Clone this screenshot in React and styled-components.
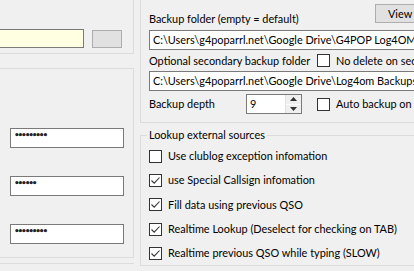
import React from 'react';
import styled, {createGlobalStyle} from 'styled-components';

const Global = createGlobalStyle`
    html, body {
        margin: 0;
        padding: 0;
        background: #f0f0f0;
    }
    body {
        font-family: 'Lato', 'Liberation Sans', sans-serif;
        font-size: 10.9px;
        color: #000;
    }
`

const Window = styled.div`
    width: 414px;
    height: 271px;
    overflow: hidden;
    display: flex;
    flex-flow: row nowrap;
    background: #f0f0f0;
`

const LeftColumn = styled.div`
    width: 134px;
    flex-shrink: 0;
    display: flex;
    flex-flow: column nowrap;
`

const RightColumn = styled.div`
    flex: 1;
    margin-left: 6px;
    display: flex;
    flex-flow: column nowrap;
    min-width: 0;
`

const Group = styled.div`
    box-sizing: border-box;
    border: 1px solid #dcdcdc;
    border-left: ${props => props.openLeft ? 'none' : '1px solid #dcdcdc'};
    border-top: ${props => props.openTop ? 'none' : '1px solid #dcdcdc'};
    border-right: ${props => props.openRight ? 'none' : '1px solid #dcdcdc'};
    height: ${props => props.h}px;
    margin-top: ${props => props.mt || 0}px;
    position: relative;
    flex-shrink: 0;
`

const Legend = styled.span`
    position: absolute;
    top: -9px;
    left: 6px;
    padding: 0 2px;
    background: #f0f0f0;
    line-height: 16px;
    white-space: nowrap;
`

const TopRow = styled.div`
    display: flex;
    align-items: center;
    gap: 8px;
    margin-top: 29px;
    margin-left: -10px;
`

const YellowInput = styled.div`
    width: 94px;
    height: 19px;
    box-sizing: border-box;
    border: 1px solid #7a7a7a;
    background: #ffffe1;
`

const GrayButton = styled.div`
    width: 30px;
    height: 18px;
    box-sizing: border-box;
    border: 1px solid #adadad;
    background: #e1e1e1;
`

const PasswordList = styled.div`
    display: flex;
    flex-flow: column nowrap;
    padding: 59px 0 0 10px;
    gap: 28px;
`

const Password = styled.div`
    width: 114px;
    height: 20px;
    box-sizing: border-box;
    border: 1px solid #7a7a7a;
    background: #fff;
    padding: 1px 0 0 3px;
    font-family: 'DejaVu Sans', sans-serif;
    font-size: 9px;
    letter-spacing: -2.2px;
    line-height: 10px;
    font-weight: bold;
    color: #222;
`

const BottomLine = styled.div`
    height: 0;
    border-top: 1px solid #dcdcdc;
    margin-top: 5px;
`

const Inner = styled.div`
    padding: 0 0 0 8px;
    display: flex;
    flex-flow: column nowrap;
`

const HeadRow = styled.div`
    display: flex;
    align-items: flex-end;
    height: 30px;
`

const Label = styled.span`
    white-space: nowrap;
    line-height: 16px;
    margin-bottom: ${props => props.mb || 0}px;
    width: ${props => props.w ? `${props.w}px` : 'auto'};
    flex-shrink: ${props => props.w ? 0 : 1};
`

const ViewButton = styled.div`
    margin-left: auto;
    align-self: flex-start;
    margin-top: 4px;
    width: 44px;
    height: 19px;
    box-sizing: border-box;
    border: 1px solid #adadad;
    background: #e1e1e1;
    padding-left: 12px;
    line-height: 17px;
    margin-right: -5px;
    flex-shrink: 0;
`

const PathInput = styled.div`
    height: 20px;
    box-sizing: border-box;
    border: 1px solid #7a7a7a;
    border-right: none;
    background: #fff;
    padding-left: 3px;
    line-height: 18px;
    white-space: nowrap;
    overflow: hidden;
    margin-right: -1px;
`

const OptionRow = styled.div`
    display: flex;
    align-items: center;
    height: 21px;
    white-space: nowrap;
    overflow: hidden;
`

const DepthRow = styled.div`
    display: flex;
    align-items: center;
    height: 20px;
    margin-top: 3px;
    white-space: nowrap;
    overflow: hidden;
`

const Spinner = styled.div`
    width: 56px;
    height: 20px;
    box-sizing: border-box;
    border: 1px solid #7a7a7a;
    background: #fff;
    display: flex;
    flex-shrink: 0;
`

const SpinValue = styled.span`
    flex: 1;
    padding-left: 3px;
    line-height: 18px;
`

const SpinButtons = styled.div`
    width: 15px;
    display: flex;
    flex-flow: column nowrap;
    border-left: 1px solid #e0e0e0;
`

const SpinButton = styled.div`
    flex: 1;
    display: flex;
    align-items: center;
    justify-content: center;
    background: #f0f0f0;
    border-bottom: ${props => props.top ? '1px solid #fff' : 'none'};
`

const Box = styled.span`
    width: 13px;
    height: 13px;
    box-sizing: border-box;
    border: 1px solid #333;
    background: #fff;
    display: inline-flex;
    align-items: center;
    justify-content: center;
    flex-shrink: 0;
    margin-left: ${props => props.ml || 0}px;
    margin-right: 6px;
`

const LookupGroup = styled(Group)`
    margin-top: 12px;
`

const CheckList = styled.div`
    display: flex;
    flex-flow: column nowrap;
    padding: 8px 0 0 8px;
`

const CheckRow = styled.div`
    display: flex;
    align-items: center;
    height: 24.3px;
    white-space: nowrap;
`

const Tick = () => (
  <svg width="11" height="11" viewBox="0 0 11 11">
    <path d="M1.5 5.5 L4.2 8.2 L9.5 2.5" fill="none" stroke="#333" strokeWidth="1.1"/>
  </svg>
)

const Checkbox = ({checked, ml}) => (
  <Box ml={ml}>{checked && <Tick/>}</Box>
)

const Arrow = ({up}) => (
  <svg width="7" height="4" viewBox="0 0 7 4">
    <path d={up ? 'M0 4 L3.5 0 L7 4 Z' : 'M0 0 L3.5 4 L7 0 Z'} fill="#333"/>
  </svg>
)

const lookups = [
  {text: 'Use clublog exception infomation', checked: false},
  {text: 'use Special Callsign infomation', checked: true},
  {text: 'Fill data using previous QSO', checked: true},
  {text: 'Realtime Lookup (Deselect for checking on TAB)', checked: true},
  {text: 'Realtime previous QSO while typing (SLOW)', checked: true},
]

const App = () => {
  return <>
    <Global/>
    <Window>
      <LeftColumn>
        <Group openLeft openTop h={54}>
          <TopRow>
            <YellowInput/>
            <GrayButton/>
          </TopRow>
        </Group>
        <Group openLeft h={190} mt={14}>
          <PasswordList>
            <Password>•••••••••</Password>
            <Password>••••••</Password>
            <Password>•••••••••</Password>
          </PasswordList>
        </Group>
        <BottomLine/>
      </LeftColumn>
      <RightColumn>
        <Group openTop openRight h={123}>
          <Inner>
            <HeadRow>
              <Label mb={3}>Backup folder (empty = default)</Label>
              <ViewButton>View</ViewButton>
            </HeadRow>
            <PathInput>C:\Users\g4poparrl.net\Google Drive\G4POP Log4OM Backups</PathInput>
            <OptionRow>
              <Label w={168}>Optional secondary backup folder</Label>
              <Checkbox/>
              <Label>No delete on secondary</Label>
            </OptionRow>
            <PathInput>C:\Users\g4poparrl.net\Google Drive\Log4om Backups</PathInput>
            <DepthRow>
              <Label w={97}>Backup depth</Label>
              <Spinner>
                <SpinValue>9</SpinValue>
                <SpinButtons>
                  <SpinButton top><Arrow up/></SpinButton>
                  <SpinButton><Arrow/></SpinButton>
                </SpinButtons>
              </Spinner>
              <Checkbox ml={15}/>
              <Label>Auto backup on exit</Label>
            </DepthRow>
          </Inner>
        </Group>
        <LookupGroup openRight h={131}>
          <Legend>Lookup external sources</Legend>
          <CheckList>
            {lookups.map(item => (
              <CheckRow key={item.text}>
                <Checkbox checked={item.checked}/>
                <Label>{item.text}</Label>
              </CheckRow>
            ))}
          </CheckList>
        </LookupGroup>
      </RightColumn>
    </Window>
  </>
}

export default App;
